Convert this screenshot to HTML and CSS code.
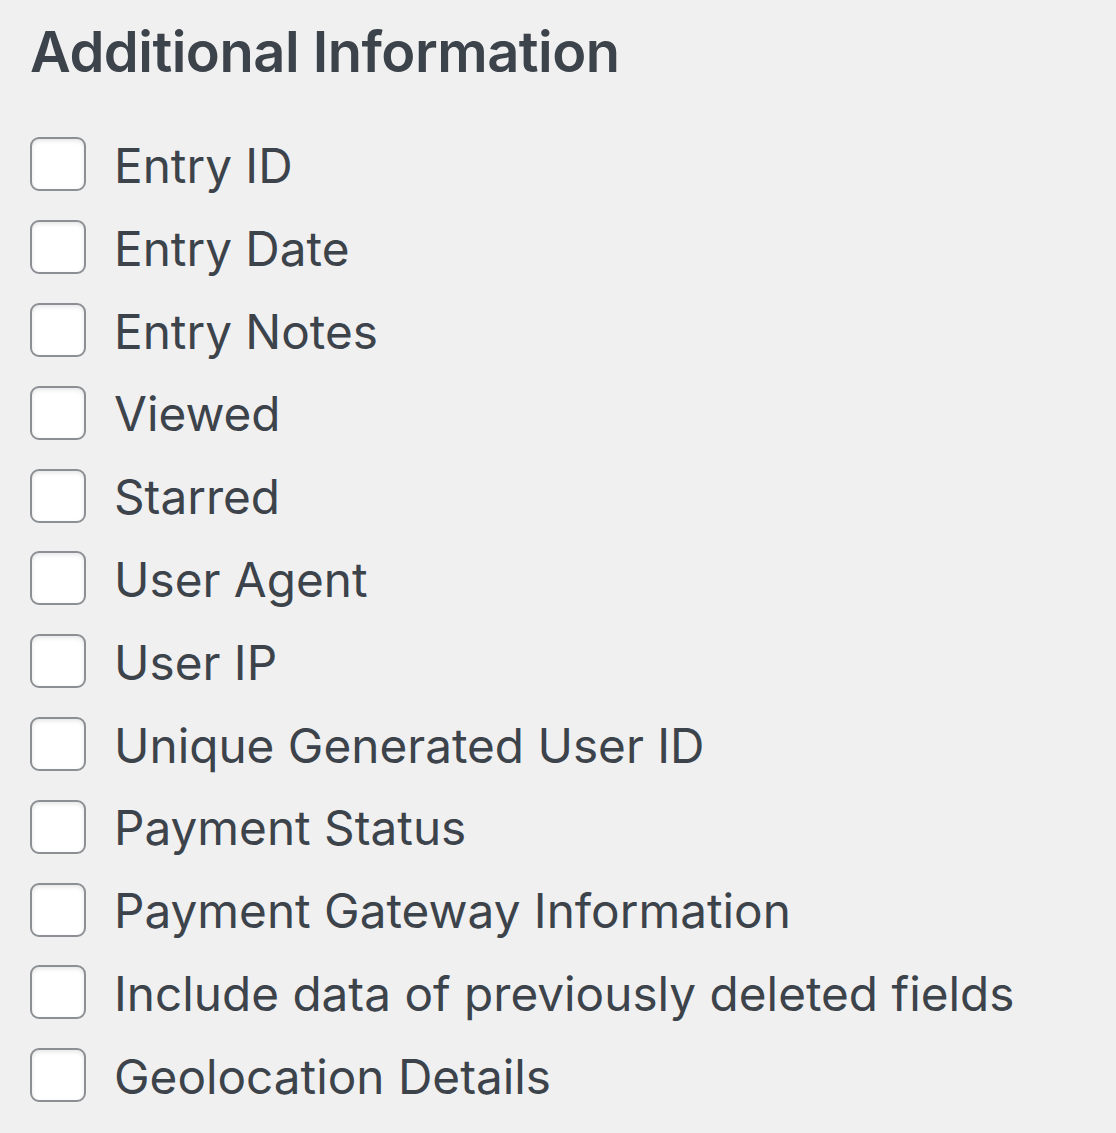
FILE: index.html
```html
<!DOCTYPE html>
<html>
<head>
<meta charset="utf-8">
<link rel="stylesheet" href="styles.css">
</head>
<body>
<div class="panel">
  <h2 class="title">Additional Information</h2>
  <ul class="options">
    <li class="option"><span class="box"></span><span class="label">Entry ID</span></li>
    <li class="option"><span class="box"></span><span class="label">Entry Date</span></li>
    <li class="option"><span class="box"></span><span class="label">Entry Notes</span></li>
    <li class="option"><span class="box"></span><span class="label">Viewed</span></li>
    <li class="option"><span class="box"></span><span class="label">Starred</span></li>
    <li class="option"><span class="box"></span><span class="label">User Agent</span></li>
    <li class="option"><span class="box"></span><span class="label">User IP</span></li>
    <li class="option"><span class="box"></span><span class="label">Unique Generated User ID</span></li>
    <li class="option"><span class="box"></span><span class="label">Payment Status</span></li>
    <li class="option"><span class="box"></span><span class="label">Payment Gateway Information</span></li>
    <li class="option"><span class="box"></span><span class="label">Include data of previously deleted fields</span></li>
    <li class="option"><span class="box"></span><span class="label">Geolocation Details</span></li>
  </ul>
</div>
</body>
</html>
```
FILE: styles.css
```css
html, body {
  margin: 0;
  padding: 0;
  background: #f0f0f1;
}
body {
  font-family: Inter, "Noto Sans", sans-serif;
  color: #3c434a;
}
.panel {
  padding: 14px 0 0 30px;
}
.title {
  margin: 0;
  font-size: 56px;
  font-weight: 600;
  letter-spacing: -0.5px;
  line-height: 76px;
  color: #3c434a;
}
.options {
  list-style: none;
  margin: 0;
  padding: 0;
  padding-top: 33px;
}
.option {
  display: flex;
  align-items: center;
  height: 82.8px;
}
.box {
  box-sizing: border-box;
  width: 56px;
  height: 54px;
  border: 2px solid #8c8f94;
  border-radius: 9px;
  background: #fff;
  box-shadow: inset 0 2px 4px rgba(0,0,0,0.1);
  flex: none;
}
.label {
  margin-left: 28px;
  padding-top: 5px;
  font-size: 47.7px;
  line-height: 1;
}
```
